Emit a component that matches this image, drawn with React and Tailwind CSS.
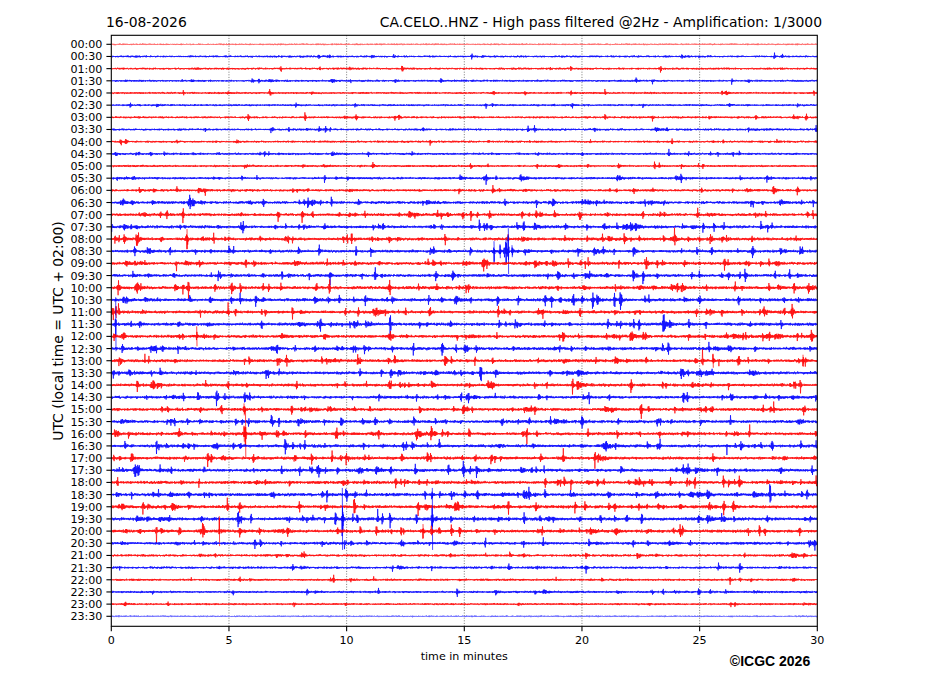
import React, { useMemo } from "react";

const X0 = 111.3, X1 = 817.3, Y0 = 35.3, Y1 = 626.3;
const W = X1 - X0;
const rowY = (i) => 44.3 + i * 12.17;
const minX = (m) => X0 + (m * W) / 30;

function mulberry32(a) {
  return function () {
    a |= 0;
    a = (a + 0x6d2b79f5) | 0;
    let t = Math.imul(a ^ (a >>> 15), 1 | a);
    t = (t + Math.imul(t ^ (t >>> 7), 61 | t)) ^ t;
    return ((t ^ (t >>> 14)) >>> 0) / 4294967296;
  };
}

const ACT = [
  0.0, 0.1, 0.1, 0.15, 0.12, 0.1, 0.15, 0.2, 0.15, 0.25, 0.2, 0.35,
  0.4, 0.7, 0.75, 0.8, 0.85, 0.85, 0.9, 0.85, 0.95, 0.95, 0.95, 0.95,
  0.9, 0.9, 0.85, 0.9, 0.85, 0.8, 0.85, 0.9, 0.9, 0.9, 0.85, 0.95,
  0.95, 1.0, 0.95, 1.0, 0.95, 0.65, 0.35, 0.35, 0.25, 0.3, 0.12, 0.0,
];

// [row, absX, amplitude, decay]
const EXPL = [
  [1, 372, 2, 1], [1, 483, 1.5, 1],
  [3, 441, 3, 0.6], [3, 395, 1.5, 1],
  [4, 726, 3, 1.5], [4, 722, 2, 1],
  [5, 355, 1.5, 1], [5, 643, 2.5, 0.6],
  [6, 248, 5, 0.6], [6, 305, 4.5, 0.6], [6, 395, 3, 0.6], [6, 806, 5, 0.8],
  [7, 273, 2.5, 0.6], [7, 319, 4, 0.6], [7, 528, 3, 0.6], [7, 816, 4, 0.6],
  [8, 177, 2, 0.6], [8, 430, 3, 0.6], [8, 713, 2, 0.6],
  [9, 139, 3.5, 0.6], [9, 193, 2.5, 0.6], [9, 260, 2, 0.6], [9, 412, 2, 0.6], [9, 538, 2, 0.6], [9, 718, 3, 0.6],
  [10, 488, 2.5, 0.6], [10, 588, 2, 0.6], [10, 703, 3.5, 0.6],
  [11, 257, 3, 0.6], [11, 336, 2, 0.6], [11, 460, 2.5, 2.5], [11, 520, 2.5, 5], [11, 676, 4, 1.5], [11, 740, 3, 0.6],
  [12, 232, 2, 0.6], [12, 308, 2, 0.6], [12, 459, 4, 1], [12, 773, 2.5, 2.5],
  [13, 123, 4, 0.6], [13, 132, 3.5, 0.6], [13, 190, 3, 1.5], [13, 304, 3, 1.5], [13, 505, 4, 0.6], [13, 645, 4, 0.6], [13, 751, 4, 0.6], [13, 780, 4, 0.6],
  [14, 339, 4, 0.6], [14, 365, 3, 0.6], [14, 522, 4, 0.6], [14, 540, 3, 1.5], [14, 643, 4, 0.6], [14, 813, 5, 0.6],
  [15, 180, 3, 0.6], [15, 241, 5, 0.6], [15, 434, 4, 0.6], [15, 714, 4, 0.6], [15, 772, 3, 0.6],
  [16, 187, 10, 0.8], [16, 124, 4, 1.5], [16, 372, 3, 0.6], [16, 508, 4, 0.6], [16, 710, 5, 1.5],
  [17, 494, 10, 0.5], [17, 500, 7, 0.5], [17, 506, 12, 0.6], [17, 508.3, 23, 0.3], [17, 512, 6, 0.8],
  [18, 145, 3, 0.6], [18, 246, 4, 0.6], [18, 487, 4, 0.6], [18, 553, 4, 1], [18, 776, 4, 0.6],
  [19, 375, 4, 0.6], [19, 692, 5, 0.6], [19, 740, 4, 0.6],
  [22, 116, 6, 0.3],
  [23, 115.7, 27, 0.3],
  [24, 196.7, 10, 0.3],
  [26, 713, 7, 0.6], [26, 739, 5, 0.6], [26, 803, 6, 0.6],
  [30, 244, 6, 0.6],
  [32, 245.5, 25, 0.3], [32, 244, 8, 0.6],
  [37, 432, 5, 0.6],
  [39, 342.3, 31, 0.3], [39, 432.3, 31, 0.3], [39, 343, 7, 0.6],
  [40, 219.3, 15, 0.3], [40, 423, 7, 0.3],
  [46, 650, 1.5, 0.6],
];

function buildTraces() {
  const out = [];
  for (let i = 0; i < 48; i++) {
    const yc = rowY(i);
    const light = i === 0 || i === 47;
    const rng = mulberry32(1234 + i * 7919);
    const a = ACT[i];
    const evs = [];
    const n = light ? 1 : Math.round(4 + a * 44);
    for (let e = 0; e < n; e++) {
      const cluster = rng() < 0.15;
      const big = rng() < 0.12;
      let amp = 1.45 * (0.9 + a * 1.3) * (1 + -Math.log(1 - rng() * 0.97) * 0.8) * (big ? 1.5 : 1);
      if (cluster) amp *= 0.5;
      if (light) amp = 0.6;
      evs.push({
        x: rng() * W,
        a: amp,
        d: cluster ? 1.5 + rng() * 3 : 0.3 + rng() * 0.7,
        r: 0.25 + rng() * 0.3,
      });
    }
    const spikes = [];
    for (const ex of EXPL) {
      if (ex[0] === i) {
        evs.push({ x: ex[1] - X0, a: ex[2] * 1.2, d: ex[3], r: Math.min(0.4, ex[3]) });
        if (ex[2] >= 6) spikes.push(ex);
      }
    }
    const base = light ? 0.7 : 0.8 + a * 0.5;
    const STEP = 0.4;
    const N = Math.ceil(W / STEP);
    let d = "";
    let slow = 1;
    for (let k = 0; k <= N; k++) {
      const x = k * STEP;
      slow = slow * 0.97 + (0.5 + rng()) * 0.03;
      let s = base * slow * (0.6 + 0.8 * rng());
      for (let q = 0; q < evs.length; q++) {
        const ev = evs[q];
        const dx = x - ev.x;
        if (dx > -ev.r * 4 && dx < ev.d * 6) {
          s += ev.a * (dx < 0 ? Math.exp(dx / ev.r) : Math.exp(-dx / ev.d));
        }
      }
      const sign = k % 2 ? 1 : -1;
      const y = yc + sign * s * (0.35 + 0.65 * rng());
      d += (k === 0 ? "M" : "L") + (X0 + x).toFixed(2) + "," + y.toFixed(2);
    }
    for (const sp of spikes) {
      d += "M" + sp[1].toFixed(2) + "," + (yc - sp[2]).toFixed(2) + "L" + (sp[1] + 0.3).toFixed(2) + "," + (yc + sp[2]).toFixed(2);
    }
    out.push({
      d,
      color: light ? (i % 2 ? "#5a5aff" : "#ff5a5a") : i % 2 ? "#0000ff" : "#ff0000",
    });
  }
  return out;
}

const label = (i) =>
  String(Math.floor(i / 2)).padStart(2, "0") + ":" + (i % 2 ? "30" : "00");

function Chart() {
  const traces = useMemo(buildTraces, []);
  const rows = Array.from({ length: 48 }, (_, i) => i);
  const xt = [0, 5, 10, 15, 20, 25, 30];
  return (
    <svg width="927" height="620" className="block" style={{ fontFamily: "'DejaVu Sans', sans-serif" }}>
      <g transform="translate(0,-30)">
        <defs>
          <clipPath id="plotclip">
            <rect x={X0} y={Y0} width={W} height={Y1 - Y0} />
          </clipPath>
        </defs>
        <rect x={X0} y={Y0} width={W} height={Y1 - Y0} fill="#ffffff" />
        {[5, 10, 15, 20, 25].map((m) => (
          <line key={m} x1={minX(m)} x2={minX(m)} y1={Y0} y2={Y1} stroke="#555" strokeWidth="0.8" strokeDasharray="1,1.6" />
        ))}
        <g clipPath="url(#plotclip)">
          {traces.map((t, i) => (
            <path key={i} d={t.d} fill="none" stroke={t.color} strokeWidth="0.75" strokeOpacity="0.95" strokeLinejoin="bevel" />
          ))}
        </g>
        <rect x={X0} y={Y0} width={W} height={Y1 - Y0} fill="none" stroke="#000" strokeWidth="1.1" />
        {rows.map((i) => (
          <g key={i}>
            <line x1={X0 - 4.9} x2={X0} y1={rowY(i)} y2={rowY(i)} stroke="#000" strokeWidth="1.1" />
            <text x={102.4} y={rowY(i) + 4} fontSize="11.1" textAnchor="end" fill="#000">
              {label(i)}
            </text>
          </g>
        ))}
        {xt.map((m) => (
          <g key={m}>
            <line x1={minX(m)} x2={minX(m)} y1={Y1} y2={Y1 + 4.9} stroke="#000" strokeWidth="1.1" />
            <text x={minX(m)} y={644.2} fontSize="11.1" textAnchor="middle" fill="#000">
              {m}
            </text>
          </g>
        ))}
        <text transform="translate(63.2,331) rotate(-90)" fontSize="13.9" textAnchor="middle" fill="#000">
          UTC (local time = UTC + 02:00)
        </text>
      </g>
    </svg>
  );
}

export default function App() {
  return (
    <div className="w-[927px] h-[696px] bg-white overflow-hidden font-['DejaVu_Sans',sans-serif] text-black">
      <div className="h-[30px] flex justify-between pt-[12px] pl-[106px] pr-[105px] text-[13.9px] leading-normal">
        <span>16-08-2026</span>
        <span>CA.CELO..HNZ - High pass filtered @2Hz - Amplification: 1/3000</span>
      </div>
      <Chart />
      <div className="h-[46px] flex items-start">
        <span className="ml-[420.7px] -mt-[1px] text-[11.1px] leading-normal whitespace-nowrap">time in minutes</span>
        <span className="ml-[222px] mt-[0.5px] font-['Liberation_Sans',Arial,sans-serif] font-bold text-[14px] leading-normal whitespace-nowrap">
          ©ICGC 2026
        </span>
      </div>
    </div>
  );
}
